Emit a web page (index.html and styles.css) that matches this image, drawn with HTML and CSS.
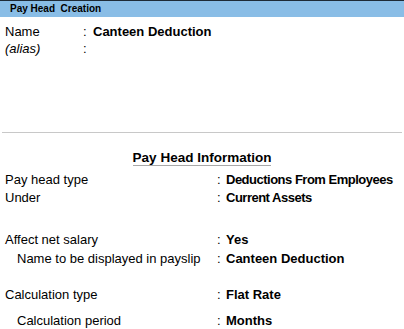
FILE: index.html
```html
<!DOCTYPE html>
<html lang="en">
<head>
    <meta charset="UTF-8">
    <meta name="viewport" content="width=device-width, initial-scale=1.0">
    <title>Pay Head Creation</title>
<link rel="stylesheet" href="styles.css">
</head>
<body>
    <div class="title-bar">Pay Head&nbsp; Creation</div>
    <section class="top-box">
        <div class="name-row"><span class="label">Name</span><span class="colon">:</span><span class="value">Canteen Deduction</span></div>
        <div class="name-row"><span class="label alias">(alias)</span><span class="colon">:</span><span class="value"></span></div>
    </section>
    <div class="divider"></div>
    <section class="info-box">
        <div class="info-title"><span>Pay Head Information</span></div>
        <div class="info-row first"><span class="label">Pay head type</span><span class="colon">:</span><span class="value tight">Deductions From Employees</span></div>
        <div class="info-row"><span class="label">Under</span><span class="colon">:</span><span class="value tight">Current Assets</span></div>
        <div class="info-row gap-big"><span class="label">Affect net salary</span><span class="colon">:</span><span class="value">Yes</span></div>
        <div class="info-row gap-tiny sub"><span class="label">Name to be displayed in payslip</span><span class="colon">:</span><span class="value">Canteen Deduction</span></div>
        <div class="info-row gap-mid"><span class="label">Calculation type</span><span class="colon">:</span><span class="value">Flat Rate</span></div>
        <div class="info-row gap-small sub"><span class="label">Calculation period</span><span class="colon">:</span><span class="value">Months</span></div>
    </section>
</body>
</html>
```

FILE: styles.css
```css
    body {
        margin: 0;
        background: #fff;
        color: #000;
        font-family: "Liberation Sans", Arial, sans-serif;
        font-size: 13px;
        }
    .title-bar {
        height: 16px;
        line-height: 16px;
        border-top: 1px solid #1e2a36;
        background-color: #89bde6;
        padding-left: 10px;
        font-size: 10px;
        font-weight: bold;
    }
    .top-box {
        padding-top: 6px;
        height: 109px;
    }
    .name-row {
        display: grid;
        grid-template-columns: 78px 10px auto;
        padding-left: 5px;
        line-height: 17px;
    }
    .alias {
        font-style: italic;
    }
    .value {
        font-weight: bold;
    }
    .tight {
        letter-spacing: -0.5px;
    }
    .divider {
        height: 1px;
        margin: 0 2px;
        background-color: #c8c8c8;
    }
    .info-title {
        margin-top: 17px;
        text-align: center;
    }
    .info-title > span {
        display: inline-block;
        font-size: 13.5px;
        font-weight: bold;
        line-height: 15px;
        border-bottom: 1px solid #a8a8a8;
        }
    .info-row {
        display: grid;
        grid-template-columns: 212px 9px auto;
        padding-left: 5px;
        line-height: 18px;
    }
    .info-row.first { margin-top: 5px; }
    .info-row.gap-big { margin-top: 24px; }
    .info-row.gap-tiny { margin-top: 1px; }
    .info-row.gap-mid { margin-top: 18px; }
    .info-row.gap-small { margin-top: 8px; }
    .info-row.sub > .label {
        padding-left: 12px;
    }
```
